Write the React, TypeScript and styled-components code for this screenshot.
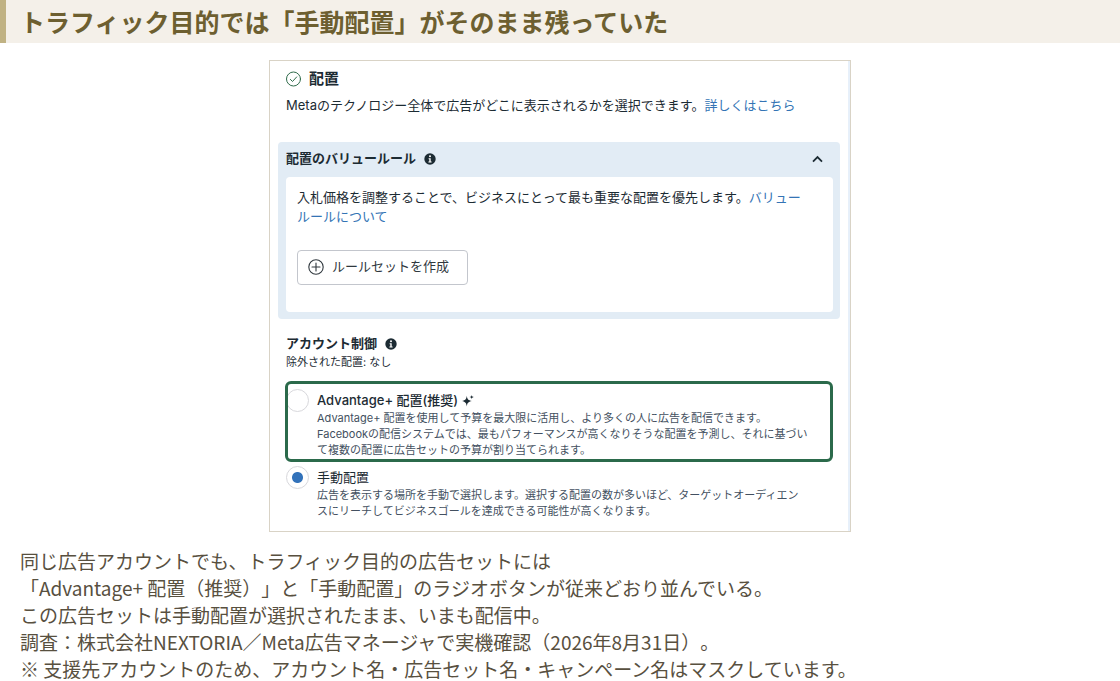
import React from "react";
import styled, { createGlobalStyle } from "styled-components";

const GlobalStyle = createGlobalStyle`
  *, *::before, *::after { box-sizing: border-box; }
  body { margin: 0; background: #fff; }
`;

const Page = styled.main`
  font-family: "Noto Sans CJK JP", sans-serif;
  text-spacing-trim: space-all;
  color: #58503f;
`;

const Heading = styled.h2`
  margin: 0;
  padding: 3px 14px;
  border-left: 6px solid #c0b283;
  background: #f4f0e9;
  color: #6d5f30;
  font-size: 25px;
  font-weight: 700;
  line-height: 37px;
`;

const Figure = styled.figure`
  margin: 17px 0 0;
`;

const Card = styled.div`
  max-width: 582px;
  margin: 0 auto;
  padding: 6px 0 12px;
  border: 1px solid #d9d3c6;
  box-shadow: inset -2px 0 0 #e7f0fa;
  font-family: Inter, "Noto Sans CJK JP", sans-serif;
  font-size: 13px;
  line-height: 19px;
  color: #1c2b33;
`;

const TitleRow = styled.div`
  display: flex;
  align-items: center;
  gap: 8px;
  padding: 0 16px;
`;

const CardTitle = styled.h3`
  margin: 0;
  font-size: 15px;
  font-weight: 700;
  line-height: 24px;
`;

const Lead = styled.p`
  margin: 5px 16px 27px;
`;

const Link = styled.a`
  color: #3474b5;
  text-decoration: none;
`;

const ValuePanel = styled.section`
  margin: 0 10px 0 8px;
  padding: 0 7px 7px 8px;
  border-radius: 4px;
  background: #e2ecf5;
`;

const PanelToggle = styled.button`
  display: flex;
  align-items: center;
  gap: 8px;
  width: 100%;
  height: 35px;
  padding: 0 10px 2px 0;
  border: 0;
  background: none;
  color: inherit;
  font: inherit;
  font-weight: 700;

  svg:last-child { margin-left: auto; }
`;

const PanelBody = styled.div`
  padding: 11px 11px 27px;
  border-radius: 4px;
  background: #fff;

  p { margin: 0 0 24px; }
`;

const CreateButton = styled.button`
  display: inline-flex;
  align-items: center;
  gap: 8px;
  height: 35px;
  padding: 0 18px 2px 10px;
  border: 1px solid #c3c6cd;
  border-radius: 4px;
  background: #fff;
  color: #30383e;
  font: inherit;
  vertical-align: top;
`;

const Controls = styled.section`
  padding: 15px 16px 0;
`;

const ControlTitle = styled.h4`
  display: flex;
  align-items: center;
  gap: 8px;
  margin: 0;
  font-size: 13px;
  font-weight: 700;
`;

const Excluded = styled.p`
  margin: 1px 0 11px;
  font-size: 11px;
  line-height: 16px;
`;

const Options = styled.fieldset`
  min-width: 0;
  margin: 0 17px 0 15px;
  padding: 0;
  border: 0;
`;

const Option = styled.div<{ $highlighted?: boolean }>`
  position: relative;
  display: flex;
  gap: 8px;
  padding: ${(p) => (p.$highlighted ? "10px 0 4px 1px" : "6px 0 0 1px")};

  &::after {
    content: "";
    display: ${(p) => (p.$highlighted ? "block" : "none")};
    position: absolute;
    inset: 0;
    border: 3px solid #2b6a4b;
    border-radius: 6px;
    pointer-events: none;
  }
`;

const Radio = styled.input`
  appearance: none;
  flex: none;
  width: 23px;
  height: 23px;
  margin: -2px 0 0;
  border: 1px solid #d8d8dc;
  border-radius: 50%;
  background: #fff;

  &:checked {
    background: radial-gradient(circle, #3272ba 5px, #fff 6px);
  }
`;

const OptionLabel = styled.label<{ $strong?: boolean }>`
  display: flex;
  align-items: center;
  gap: 4px;
  font-weight: ${(p) => (p.$strong ? 500 : 400)};
`;

const OptionText = styled.p`
  margin: 0;
  color: #435060;
  font-size: 11px;
  line-height: 16px;
`;

const Caption = styled.figcaption`
  padding: 15px 20px 0;
  font-size: 19px;
  line-height: 27px;
`;

const CheckIcon = () => (
  <svg width="15" height="16" viewBox="0 0 15 16" fill="none" stroke="#2f6b4a" strokeLinecap="round" strokeLinejoin="round" aria-hidden="true">
    <circle cx="7.5" cy="8" r="7" />
    <path d="M4.4 8.4l2.1 2.1 4.2-4.6" />
  </svg>
);

const InfoIcon = () => (
  <svg width="12" height="12" viewBox="0 0 12 12" aria-hidden="true">
    <circle cx="6" cy="6" r="5.7" fill="#1c2b33" />
    <circle cx="6" cy="3.2" r="1" fill="#fff" />
    <path d="M4.6 5.2h2.1v3.2h.9v1H4.4v-1h.9V6.2h-.7z" fill="#fff" />
  </svg>
);

const ChevronUp = () => (
  <svg width="11" height="8" viewBox="0 0 11 8" fill="none" stroke="#1c2b33" strokeWidth="1.8" aria-hidden="true">
    <path d="M1 6.600l4.500-4.500L10 6.600" />
  </svg>
);

const PlusCircle = () => (
  <svg width="16" height="16" viewBox="0 0 16 16" fill="none" stroke="#30383e" strokeWidth="1.1" strokeLinecap="round" aria-hidden="true">
    <circle cx="8" cy="8" r="7.2" />
    <path d="M8 4v8M4 8h8" />
  </svg>
);

const SparkleIcon = () => (
  <svg width="12" height="12" viewBox="0 0 12 12" fill="#1c2b33" aria-hidden="true">
    <path d="M4.8 .8C5.300 4.300 6.200 5.200 9.800 6.100C6.200 7 5.300 7.900 4.800 11.600C4.300 7.900 3.400 7 0 6.100C3.400 5.200 4.300 4.300 4.800 .8Z" />
    <path d="M9.700 0C9.900 1.300 10.400 1.800 12 2.100C10.400 2.400 9.900 2.900 9.700 4.300C9.500 2.900 9 2.400 7.500 2.100C9 1.800 9.500 1.300 9.700 0Z" />
  </svg>
);

export default function App() {
  return (
    <Page lang="ja">
      <GlobalStyle />
      <Heading>トラフィック目的では「手動配置」がそのまま残っていた</Heading>
      <Figure>
        <Card>
          <TitleRow>
            <CheckIcon />
            <CardTitle>配置</CardTitle>
          </TitleRow>
          <Lead>
            Metaのテクノロジー全体で広告がどこに表示されるかを選択できます。
            <Link href="#details">詳しくはこちら</Link>
          </Lead>

          <ValuePanel>
            <PanelToggle type="button" aria-expanded="true">
              配置のバリュールール
              <InfoIcon />
              <ChevronUp />
            </PanelToggle>
            <PanelBody>
              <p>
                入札価格を調整することで、ビジネスにとって最も重要な配置を優先します。
                <Link href="#value-rules">
                  バリュー
                  <br />
                  ルールについて
                </Link>
              </p>
              <CreateButton type="button">
                <PlusCircle />
                ルールセットを作成
              </CreateButton>
            </PanelBody>
          </ValuePanel>

          <Controls>
            <ControlTitle>
              アカウント制御
              <InfoIcon />
            </ControlTitle>
            <Excluded>除外された配置: なし</Excluded>
          </Controls>

          <Options aria-label="配置">
            <Option $highlighted>
              <Radio type="radio" name="placement" id="advantage" />
              <div>
                <OptionLabel htmlFor="advantage" $strong>
                  Advantage+ 配置(推奨)
                  <SparkleIcon />
                </OptionLabel>
                <OptionText>
                  Advantage+ 配置を使用して予算を最大限に活用し、より多くの人に広告を配信できます。
                  <br />
                  Facebookの配信システムでは、最もパフォーマンスが高くなりそうな配置を予測し、それに基づい
                  <br />
                  て複数の配置に広告セットの予算が割り当てられます。
                </OptionText>
              </div>
            </Option>
            <Option>
              <Radio type="radio" name="placement" id="manual" defaultChecked />
              <div>
                <OptionLabel htmlFor="manual">手動配置</OptionLabel>
                <OptionText>
                  広告を表示する場所を手動で選択します。選択する配置の数が多いほど、ターゲットオーディエン
                  <br />
                  スにリーチしてビジネスゴールを達成できる可能性が高くなります。
                </OptionText>
              </div>
            </Option>
          </Options>
        </Card>
        <Caption>
          同じ広告アカウントでも、トラフィック目的の広告セットには
          <br />
          「Advantage+ 配置（推奨）」と「手動配置」のラジオボタンが従来どおり並んでいる。
          <br />
          この広告セットは手動配置が選択されたまま、いまも配信中。
          <br />
          調査：株式会社NEXTORIA／Meta広告マネージャで実機確認（2026年8月31日）。
          <br />
          ※ 支援先アカウントのため、アカウント名・広告セット名・キャンペーン名はマスクしています。
        </Caption>
      </Figure>
    </Page>
  );
}
